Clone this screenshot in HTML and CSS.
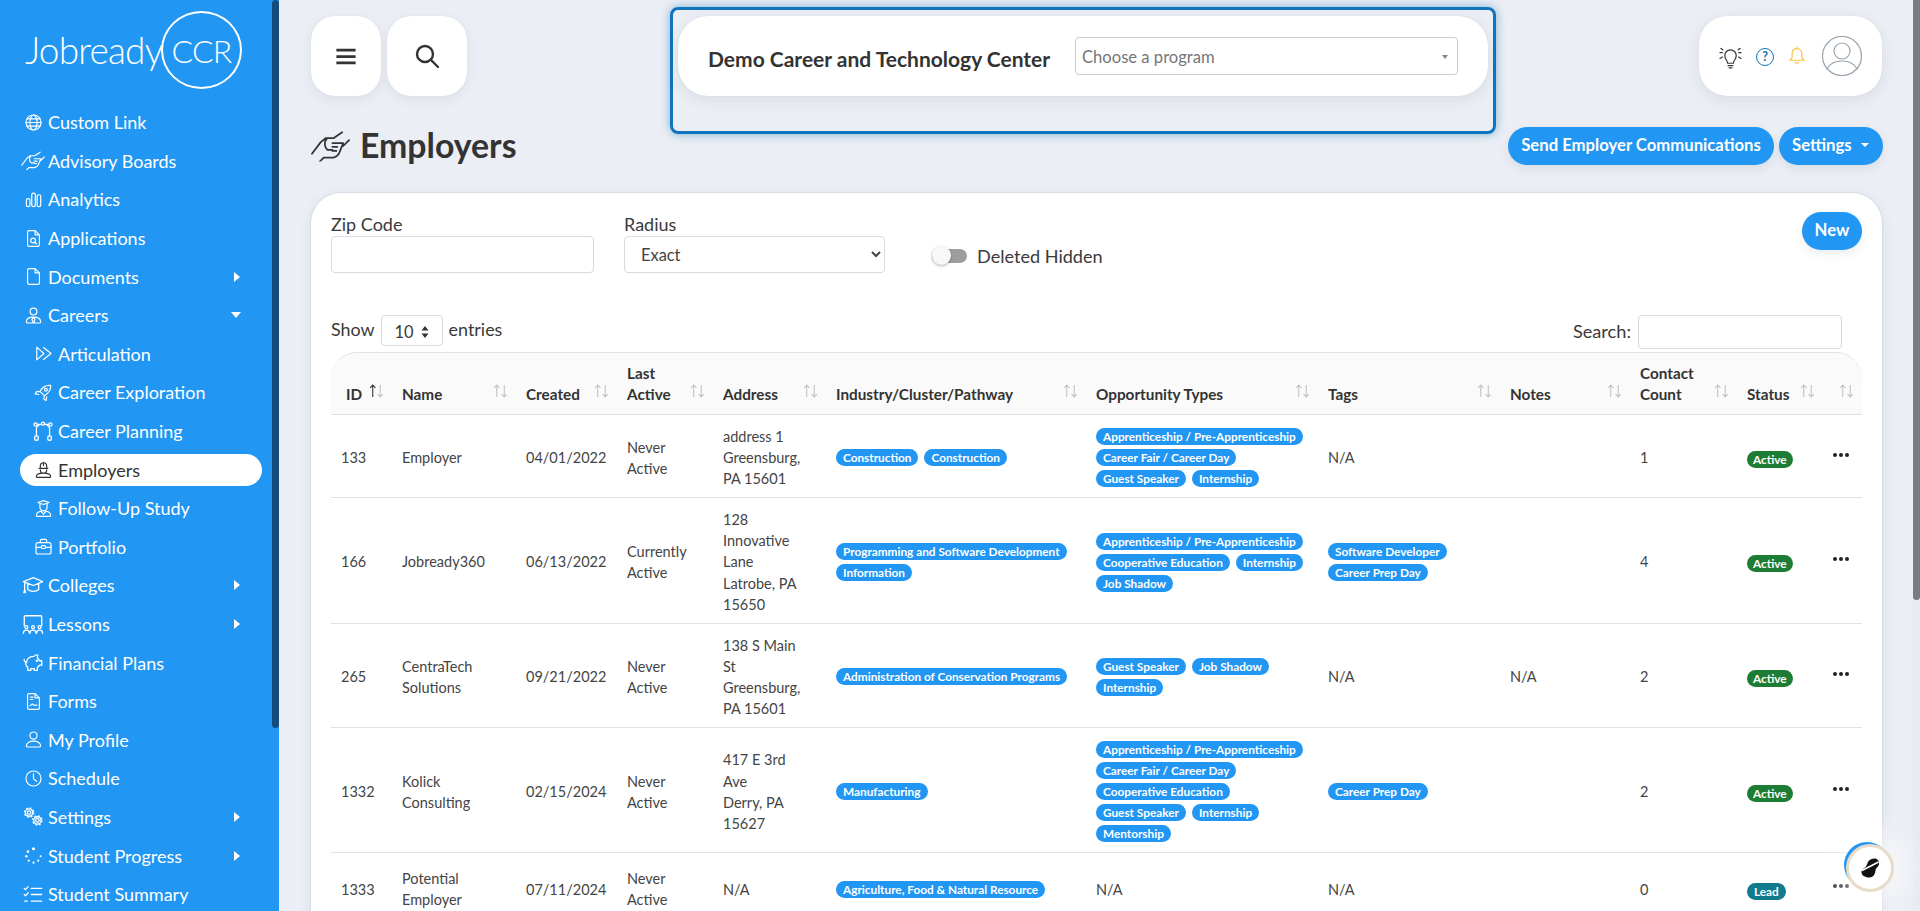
FILE: index.html
```html
<!DOCTYPE html>
<html lang="en">
<head>
<meta charset="utf-8">
<title>Employers</title>
<link rel="stylesheet" href="styles.css">
</head>
<body>
<svg class="defs" width="0" height="0" aria-hidden="true">
  <symbol id="i-shake" viewBox="0 0 40 32"><path d="M1 24L10 12M39 10l-6 6M10 12l5-4h8L32 2M16 9c-3 3-2 9 1 11h5M22 13h11l-4 10c-1 3-3 4-6 5H13l-4 4M22 17h5M22 21h4"/></symbol>
  <symbol id="i-sort" viewBox="0 0 14 13"><path class="up" d="M3.500 12V1M1 3.500L3.500 1 6 3.500"/><path class="down" d="M10.500 1v11M8 9.500l2.500 2.500 2.500-2.500"/></symbol>
  <symbol id="i-doc" viewBox="0 0 24 24"><path d="M6.500 2H14l5.500 5.500V20a2 2 0 0 1-2 2h-11a2 2 0 0 1-2-2V4a2 2 0 0 1 2-2zM14 2v5.500h5.500"/></symbol>
</svg>

<div class="app">
  <aside class="sidebar">
    <div class="logo"><span class="logo-word">Jobready</span><span class="logo-ring">CCR</span></div>
    <nav class="nav">
      <a class="item"><span class="ic"><svg viewBox="0 0 24 24"><circle cx="12" cy="12" r="9.500"/><ellipse cx="12" cy="12" rx="4.500" ry="9.500"/><path d="M2.500 12h19M3.800 7.500h16.400M3.800 16.500h16.400"/></svg></span>Custom Link</a>
      <a class="item"><span class="ic"><svg class="wide" viewBox="0 0 40 32"><use href="#i-shake"/></svg></span>Advisory Boards</a>
      <a class="item"><span class="ic"><svg viewBox="0 0 24 24"><rect x="3" y="11" width="4.500" height="10" rx="2"/><rect x="9.800" y="4" width="4.500" height="17" rx="2"/><rect x="16.600" y="6" width="4.500" height="15" rx="2"/></svg></span>Analytics</a>
      <a class="item"><span class="ic"><svg viewBox="0 0 24 24"><use href="#i-doc"/><circle cx="11.500" cy="14.500" r="3"/><path d="M13.700 16.700l2.300 2.300"/></svg></span>Applications</a>
      <a class="item"><span class="ic"><svg viewBox="0 0 24 24"><use href="#i-doc"/></svg></span>Documents<i class="car-r"></i></a>
      <a class="item"><span class="ic"><svg viewBox="0 0 24 24"><circle cx="12" cy="7" r="4.300"/><path d="M4 21.500c-1 0-1-1-1-1.500 0-4 4-6 9-6s9 2 9 6c0 .5 0 1.500-1 1.500zM12 14.500l-2 2.500 2 4.500 2-4.500z"/></svg></span>Careers<i class="car-d"></i></a>
      <a class="item sub"><span class="ic"><svg viewBox="0 0 24 24"><path d="M3.500 4v16l9-8zM12 4.500L21.500 12 12 19.500"/></svg></span>Articulation</a>
      <a class="item sub"><span class="ic"><svg viewBox="0 0 24 24"><path d="M21 3c-6-.5-10.500 2-13.500 7.500l5.500 5.500C18.500 13 21.500 9 21 3zM7.500 10.500L3 11l-1.500 2.800 4.500.7M13 16l-.5 4.500 2.800 1.500.7-4.500"/><circle cx="15" cy="8.500" r="1.800"/></svg></span>Career Exploration</a>
      <a class="item sub"><span class="ic"><svg class="big" viewBox="0 0 24 24"><circle cx="3.500" cy="4" r="1.800"/><circle cx="12" cy="3" r="1.800"/><circle cx="20.500" cy="4" r="1.800"/><rect x="2.500" y="17" width="4" height="5" rx="1.500"/><rect x="17.500" y="17" width="4" height="5" rx="1.500"/><path d="M5.300 3.800h4.900M13.800 3.800h4.900M4.500 17V8c0-1 1-2 3-3.500M19.500 17V8c0-1-1-2-3-3.500"/></svg></span>Career Planning</a>
      <a class="item sub active"><span class="ic"><svg viewBox="0 0 24 24"><path d="M6.500 10.500h11M8 10V7.500a4 4 0 0 1 8 0V10M12 3v4M8 12.500a4 4 0 0 0 8 0M4 22c-.8 0-1-.7-1-1.300C3 18 7 16.500 12 16.500s9 1.500 9 4.200c0 .6-.2 1.300-1 1.300z"/></svg></span>Employers</a>
      <a class="item sub"><span class="ic"><svg viewBox="0 0 24 24"><path d="M5 4.500L12 2l7 2.500L12 7zM7.500 6v4.500a4.500 4.500 0 0 0 9 0V6M4 22c-.8 0-1-.7-1-1.300C3 18 6 16 9 15.500l3 3.500 3-3.500c3 .5 6 2.500 6 5.200 0 .6-.2 1.300-1 1.300z"/></svg></span>Follow-Up Study</a>
      <a class="item sub"><span class="ic"><svg viewBox="0 0 24 24"><rect x="2.500" y="7" width="19" height="14.500" rx="2.500"/><path d="M8 7V4.500A1.500 1.500 0 0 1 9.500 3h5A1.500 1.500 0 0 1 16 4.500V7M2.500 13h7M14.500 13h7"/><rect x="9.500" y="11" width="5" height="3.500" rx="1"/></svg></span>Portfolio</a>
      <a class="item"><span class="ic"><svg class="big" viewBox="0 0 24 24"><path d="M1 7.500L12.500 3 23 7.500 12.500 12zM6 10v6.500c3.500 3 9.500 3 12.500 0V10M2.500 8.500V17M1.500 20l1-3 1 3z"/></svg></span>Colleges<i class="car-r"></i></a>
      <a class="item"><span class="ic"><svg class="big" viewBox="0 0 24 24"><path d="M2 13.500V3.500A1.500 1.500 0 0 1 3.500 2h17A1.500 1.500 0 0 1 22 3.500v10"/><circle cx="4.500" cy="15" r="1.700"/><circle cx="12" cy="15" r="1.700"/><circle cx="19.500" cy="15" r="1.700"/><path d="M1 22c0-2.500 1-3.500 3.500-3.500S8 19.500 8 22M8.500 22c0-2.500 1-3.500 3.500-3.500s3.500 1 3.500 3.500M16 22c0-2.500 1-3.500 3.500-3.500S23 19.500 23 22"/></svg></span>Lessons<i class="car-r"></i></a>
      <a class="item"><span class="ic"><svg class="big" viewBox="0 0 24 24"><path d="M5 10c1-3 4-5 8-5 1-1 3-2 4.500-1.500l-.5 3c1 1 2 2 2.500 3.500H22v5h-2.500c-.5 1-1.500 2-2.500 2.500V21h-3.500v-2h-4v2H6v-3.500C4 16 3 13 5 10zM5 11.500C3 11.500 1.500 10.500 2 8.500"/><circle cx="16.500" cy="10" r=".8"/></svg></span>Financial Plans</a>
      <a class="item"><span class="ic"><svg viewBox="0 0 24 24"><use href="#i-doc"/><path d="M8 6.500h3.500M8 9.500h3M7.500 17.500l3-2.500 2.500 2 3.500-.5"/></svg></span>Forms</a>
      <a class="item"><span class="ic"><svg viewBox="0 0 24 24"><circle cx="12" cy="7" r="4.500"/><path d="M4.500 21.500c-1 0-1.500-.7-1.500-1.500 0-3.500 4-6 9-6s9 2.500 9 6c0 .8-.5 1.500-1.500 1.500z"/></svg></span>My Profile</a>
      <a class="item"><span class="ic"><svg viewBox="0 0 24 24"><circle cx="12" cy="12" r="9.500"/><path d="M12 6v6.500l4 3"/></svg></span>Schedule</a>
      <a class="item"><span class="ic"><svg class="big" viewBox="0 0 24 24"><circle cx="7.500" cy="7.500" r="2"/><circle class="gear" cx="7.500" cy="7.500" r="5.200"/><circle cx="7.500" cy="7.500" r="4.200"/><circle cx="17" cy="16.500" r="2"/><circle class="gear" cx="17" cy="16.500" r="5.200"/><circle cx="17" cy="16.500" r="4.200"/></svg></span>Settings<i class="car-r"></i></a>
      <a class="item"><span class="ic"><svg class="fill" viewBox="0 0 24 24"><circle cx="12" cy="3.500" r="2"/><circle cx="5" cy="7" r="1.700"/><circle cx="3" cy="13" r="1.500"/><circle cx="6" cy="18.500" r="1.400"/><circle cx="12" cy="21" r="1.400"/><circle cx="18" cy="18.500" r="1.300"/><circle cx="21" cy="13" r="1.300"/></svg></span>Student Progress<i class="car-r"></i></a>
      <a class="item"><span class="ic"><svg class="big" viewBox="0 0 24 24"><path d="M2 5l1.500 1.500L6.500 3M2 12l1.500 1.500L6.500 10M2.500 19.500h3M10 5h12M10 12h12M10 19.500h12"/></svg></span>Student Summary</a>
    </nav>
    <div class="side-thumb"></div>
  </aside>

  <main class="main">
    <header class="top">
      <button class="tile tile-menu" type="button" aria-label="Menu"><svg viewBox="0 0 24 18"><path d="M1.500 2h21M1.500 9h21M1.500 16h21"/></svg></button>
      <button class="tile tile-search" type="button" aria-label="Search"><svg viewBox="0 0 24 24"><circle cx="10" cy="10" r="8"/><path d="M16 16l7 7"/></svg></button>
      <div class="focus-box">
        <div class="school">
          <span class="school-name">Demo Career and Technology Center</span>
          <div class="program"><span>Choose a program</span><i class="program-caret"></i></div>
        </div>
      </div>
      <div class="tools">
        <svg class="t-bulb" viewBox="0 0 24 24"><path d="M9 18c0-3-3-4-3-8a6 6 0 0 1 12 0c0 4-3 5-3 8zM9.500 20.500h5M10.500 22.800h3M1 7h2.500M1 13l2.500-1.500M2 2.500L4 4M23 7h-2.500M23 13l-2.500-1.500M22 2.500L20 4"/></svg>
        <span class="t-help">?</span>
        <svg class="t-bell" viewBox="0 0 24 24"><path d="M12 1v2.500M12 3.500c-4 0-6.500 3-6.500 7v4c0 2-1.500 3-3 4.500h19c-1.500-1.500-3-2.500-3-4.500v-4c0-4-2.500-7-6.500-7zM9.500 22c1.500 1 3.500 1 5 0"/></svg>
        <svg class="t-user" viewBox="0 0 40 40"><circle cx="20" cy="20" r="19.500"/><circle cx="20" cy="15" r="8"/><path d="M5 33c3-6 9-8 15-8s12 2 15 8"/></svg>
      </div>
    </header>

    <div class="title-row">
      <svg class="title-ic" viewBox="0 0 40 32"><use href="#i-shake"/></svg>
      <h1 class="title">Employers</h1>
      <div class="title-btns">
        <button class="btn" type="button">Send Employer Communications</button>
        <button class="btn btn-set" type="button">Settings<i class="btn-caret"></i></button>
      </div>
    </div>

    <section class="card">
      <div class="filters">
        <div class="field field-zip"><label class="lbl" for="zip">Zip Code</label><input class="inp" id="zip" type="text"></div>
        <div class="field field-radius"><label class="lbl" for="radius">Radius</label><select class="inp sel" id="radius"><option>Exact</option></select></div>
        <div class="toggle"><span class="track"></span><span>Deleted Hidden</span></div>
        <button class="btn btn-new" type="button">New</button>
      </div>
      <div class="controls">
        <div class="show">Show <span class="len"><span>10</span><svg viewBox="0 0 8 12"><path d="M4 0l3.500 4.500h-7zM4 12L.5 7.500h7z"/></svg></span> entries</div>
        <div class="find">Search: <input class="find-inp" type="text" aria-label="Search"></div>
      </div>
      <table class="tbl">
        <colgroup><col class="c1"><col class="c2"><col class="c3"><col class="c4"><col class="c5"><col class="c6"><col class="c7"><col class="c8"><col class="c9"><col class="c10"><col class="c11"><col class="c12"></colgroup>
        <thead>
          <tr>
            <th class="th-id">ID<svg class="sort on" viewBox="0 0 14 13"><use href="#i-sort"/></svg></th>
            <th>Name<svg class="sort" viewBox="0 0 14 13"><use href="#i-sort"/></svg></th>
            <th>Created<svg class="sort" viewBox="0 0 14 13"><use href="#i-sort"/></svg></th>
            <th>Last<br>Active<svg class="sort" viewBox="0 0 14 13"><use href="#i-sort"/></svg></th>
            <th>Address<svg class="sort" viewBox="0 0 14 13"><use href="#i-sort"/></svg></th>
            <th>Industry/Cluster/Pathway<svg class="sort" viewBox="0 0 14 13"><use href="#i-sort"/></svg></th>
            <th>Opportunity Types<svg class="sort" viewBox="0 0 14 13"><use href="#i-sort"/></svg></th>
            <th>Tags<svg class="sort" viewBox="0 0 14 13"><use href="#i-sort"/></svg></th>
            <th>Notes<svg class="sort" viewBox="0 0 14 13"><use href="#i-sort"/></svg></th>
            <th>Contact<br>Count<svg class="sort" viewBox="0 0 14 13"><use href="#i-sort"/></svg></th>
            <th>Status<svg class="sort" viewBox="0 0 14 13"><use href="#i-sort"/></svg></th>
            <th><svg class="sort" viewBox="0 0 14 13"><use href="#i-sort"/></svg></th>
          </tr>
        </thead>
        <tbody>
          <tr>
            <td>133</td><td>Employer</td><td>04/01/2022</td><td>Never<br>Active</td><td>address 1<br>Greensburg,<br>PA 15601</td>
            <td><div class="tags"><span class="tag">Construction</span><span class="tag">Construction</span></div></td>
            <td><div class="tags"><span class="tag">Apprenticeship / Pre-Apprenticeship</span><span class="tag">Career Fair / Career Day</span><span class="tag">Guest Speaker</span><span class="tag">Internship</span></div></td>
            <td>N/A</td><td></td><td>1</td><td><span class="tag st-active">Active</span></td><td><span class="more"><i></i><i></i><i></i></span></td>
          </tr>
          <tr>
            <td>166</td><td>Jobready360</td><td>06/13/2022</td><td>Currently<br>Active</td><td>128<br>Innovative<br>Lane<br>Latrobe, PA<br>15650</td>
            <td><div class="tags"><span class="tag">Programming and Software Development</span><span class="tag">Information</span></div></td>
            <td><div class="tags"><span class="tag">Apprenticeship / Pre-Apprenticeship</span><span class="tag">Cooperative Education</span><span class="tag">Internship</span><span class="tag">Job Shadow</span></div></td>
            <td><div class="tags"><span class="tag">Software Developer</span><span class="tag">Career Prep Day</span></div></td><td></td><td>4</td><td><span class="tag st-active">Active</span></td><td><span class="more"><i></i><i></i><i></i></span></td>
          </tr>
          <tr>
            <td>265</td><td>CentraTech<br>Solutions</td><td>09/21/2022</td><td>Never<br>Active</td><td>138 S Main<br>St<br>Greensburg,<br>PA 15601</td>
            <td><div class="tags"><span class="tag">Administration of Conservation Programs</span></div></td>
            <td><div class="tags"><span class="tag">Guest Speaker</span><span class="tag">Job Shadow</span><span class="tag">Internship</span></div></td>
            <td>N/A</td><td>N/A</td><td>2</td><td><span class="tag st-active">Active</span></td><td><span class="more"><i></i><i></i><i></i></span></td>
          </tr>
          <tr>
            <td>1332</td><td>Kolick<br>Consulting</td><td>02/15/2024</td><td>Never<br>Active</td><td>417 E 3rd<br>Ave<br>Derry, PA<br>15627</td>
            <td><div class="tags"><span class="tag">Manufacturing</span></div></td>
            <td><div class="tags"><span class="tag">Apprenticeship / Pre-Apprenticeship</span><span class="tag">Career Fair / Career Day</span><span class="tag">Cooperative Education</span><span class="tag">Guest Speaker</span><span class="tag">Internship</span><span class="tag">Mentorship</span></div></td>
            <td><div class="tags"><span class="tag">Career Prep Day</span></div></td><td></td><td>2</td><td><span class="tag st-active">Active</span></td><td><span class="more"><i></i><i></i><i></i></span></td>
          </tr>
          <tr class="row-last">
            <td>1333</td><td>Potential<br>Employer</td><td>07/11/2024</td><td>Never<br>Active</td><td>N/A</td>
            <td><div class="tags"><span class="tag">Agriculture, Food &amp; Natural Resource</span></div></td>
            <td>N/A</td><td>N/A</td><td></td><td>0</td><td><span class="tag st-lead">Lead</span></td><td><span class="more"><i></i><i></i><i></i></span></td>
          </tr>
        </tbody>
      </table>
    </section>
  </main>
  <div class="page-bar"><div class="page-thumb"></div></div>
</div>

<button class="chat" type="button" aria-label="Chat"><svg viewBox="0 0 24 24"><path d="M16.500 2.500c3 0 5 2.500 4.500 5.500-.3 2-1.500 3-2.500 4s-.8 2.500-1.500 5c-1 3.500-4 5-7 4.500C6.500 21 3 19 3.500 15.500c.3-2 2-3 3.500-4s1.500-2.500 3-5.500c1.200-2.300 3.500-3.500 6.500-3.500z"/><path class="slash" d="M4 14.500L20.500 6"/></svg></button>
</body>
</html>
```

FILE: styles.css
```css
* { box-sizing: border-box; }
html, body { margin: 0; height: 911px; overflow: hidden; }
body { font-family: "Lato", "Noto Sans", sans-serif; color: #3a3a3a; background: #ebeef4; font-size: 14.5px; }
.defs { position: absolute; }
.app { display: flex; height: 911px; overflow: hidden; }
button { font-family: inherit; border: 0; cursor: pointer; }

/* sidebar */
.sidebar { width: 279px; flex: none; background: #2196f3; color: #fff; position: relative; height: 911px; overflow: hidden; }
.logo { height: 103px; padding: 11px 0 0 25px; display: flex; align-items: flex-start; }
.logo-word { font-size: 37px; font-weight: 300; line-height: 78px; letter-spacing: -.8px; width: 136px; flex: none; }
.logo-ring { width: 81px; height: 78px; border: 2px solid #fff; border-radius: 50%; display: flex; align-items: center; justify-content: center; font-size: 32px; font-weight: 300; letter-spacing: -.8px; }
.nav { width: 272px; }
.item { display: flex; align-items: center; height: 38.6px; padding: 0 31px 0 21px; font-size: 18px; font-weight: 400; white-space: nowrap; }
.item.sub { padding-left: 31px; }
.item.active { background: #fff; color: #333; margin: 3.3px 10px 3.3px 20px; height: 32px; padding-left: 11px; border-radius: 16px; }
.ic { width: 24px; height: 22px; margin-right: 3px; flex: none; display: flex; align-items: center; justify-content: center; }
.ic svg { width: 19px; height: 19px; fill: none; stroke: currentColor; stroke-width: 1.5; stroke-linecap: round; stroke-linejoin: round; overflow: visible; }
.ic svg.wide { width: 24px; height: 19px; stroke-width: 2; }
.ic svg.big { width: 22px; height: 21px; }
.ic svg.fill { fill: currentColor; stroke: none; }
.ic .gear { stroke-dasharray: 2 2.09; stroke-width: 1.7; stroke-linecap: butt; }
.car-r { margin-left: auto; margin-right: 1px; width: 0; height: 0; border-left: 6px solid #fff; border-top: 5.5px solid transparent; border-bottom: 5.5px solid transparent; }
.car-d { margin-left: auto; width: 0; height: 0; border-top: 6px solid #fff; border-left: 5.5px solid transparent; border-right: 5.5px solid transparent; }
.side-thumb { position: absolute; top: 0; right: 0; width: 7px; height: 728px; background: #144d7c; border-radius: 4px; }

/* main */
.main { flex: 1; min-width: 0; padding: 16px 31px 0 32px; }
.top { display: flex; height: 80px; gap: 6px; align-items: flex-start; }
.tile { background: #fff; border-radius: 24px; height: 80px; display: flex; align-items: center; justify-content: center; box-shadow: 0 4px 12px rgba(60,80,110,.08), 0 0 1px rgba(60,80,110,.2); flex: none; }
.tile svg { fill: none; stroke: #333; }
.tile-menu { width: 70px; }
.tile-menu svg { width: 22px; height: 17px; stroke-width: 3; }
.tile-search { width: 80px; }
.tile-search svg { width: 24px; height: 24px; stroke-width: 2.4; stroke-linecap: round; }
.focus-box { margin: -9px 0 0 197px; width: 826px; height: 127px; flex: none; border: 3px solid #0f75bc; border-radius: 8px; padding: 6px 5px; box-shadow: 0 0 10px rgba(15,117,188,.5); }
.school { height: 80px; width: 810px; background: #fff; border-radius: 30px; display: flex; align-items: center; padding: 0 30px 0 30px; box-shadow: 0 4px 14px rgba(60,80,110,.1), 0 0 1px rgba(60,80,110,.2); }
.school-name { font-size: 21px; font-weight: 700; color: #333; width: 367px; flex: none; white-space: nowrap; margin-top: 4px; }
.program { flex: 1; height: 38px; border: 1px solid #c8ccd0; border-radius: 4px; display: flex; align-items: center; justify-content: space-between; padding: 2px 9px 0 6px; color: #777; font-size: 16.6px; }
.program-caret { border-top: 4px solid #888; border-left: 3.5px solid transparent; border-right: 3.5px solid transparent; }
.tools { margin-left: auto; width: 183px; height: 80px; flex: none; background: #fff; border-radius: 28px; display: flex; align-items: center; padding: 0 20px 0 20px; box-shadow: 0 4px 14px rgba(60,80,110,.1), 0 0 1px rgba(60,80,110,.2); }
.tools svg { fill: none; stroke-linecap: round; stroke-linejoin: round; flex: none; }
.t-bulb { width: 23px; height: 23px; stroke: #3a3a3a; stroke-width: 1.3; margin: 2px 14px 0 0; }
.t-help { width: 18px; height: 18px; flex: none; border: 1.5px solid #0f75b5; border-radius: 50%; color: #0f75b5; font-size: 12.5px; font-weight: 700; line-height: 15px; text-align: center; margin: 2px 14px 0 0; }
.t-bell { width: 18px; height: 20px; stroke: #f5c542; stroke-width: 1.6; margin: -2px 16px 0 0; }
.t-user { width: 40px; height: 40px; stroke: #9aa4ae; stroke-width: 1.2; }

.title-row { display: flex; align-items: center; height: 38px; margin-top: 31px; }
.title-ic { width: 39px; height: 32px; fill: none; stroke: #333; stroke-width: 1.8; stroke-linecap: round; stroke-linejoin: round; flex: none; margin-right: 10px; }
.title { margin: -3px 0 0; font-size: 33.8px; font-weight: 700; color: #333; line-height: 38px; }
.title-btns { margin-left: auto; display: flex; gap: 5px; margin-right: -1px; }
.btn { background: #2196f3; color: #fff; font-weight: 700; font-size: 16.7px; height: 38px; border-radius: 19px; padding: 0 0 2px; white-space: nowrap; box-shadow: 0 4px 10px rgba(60,80,110,.1); }
.title-btns .btn:first-child { width: 266px; }
.btn-set { width: 104px; display: flex; align-items: center; padding-left: 13px; }
.btn-caret { margin-left: 9px; border-top: 4px solid #fff; border-left: 4px solid transparent; border-right: 4px solid transparent; }
.btn-new { width: 60px; margin-left: auto; }

.card { background: #fff; border-radius: 30px 30px 0 0; margin-top: 28px; padding: 19px 20px 0; height: 800px; box-shadow: 0 0 2px rgba(60,80,110,.25), 0 4px 14px rgba(60,80,110,.08); }
.filters { display: flex; align-items: flex-start; height: 61px; }
.field { display: flex; flex-direction: column; }
.field-zip { width: 263px; margin-right: 30px; }
.field-radius { width: 261px; margin-right: 47px; }
.lbl { font-size: 18px; line-height: 24px; color: #3a3a3a; }
.inp { height: 37px; width: 100%; border: 1px solid #d4dbe3; border-radius: 4px; background: #fff; font-family: inherit; font-size: 16.4px; color: #444; padding: 0 12px; }
.toggle { display: flex; align-items: center; gap: 10px; font-size: 18.1px; line-height: 24px; margin-top: 32px; }
.track { position: relative; width: 35px; height: 14px; background: #9e9e9e; border-radius: 7px; }
.track::before { content: ""; position: absolute; left: 0; top: -3px; width: 19px; height: 19px; border-radius: 50%; background: #f8f8f8; box-shadow: 0 1px 3px rgba(0,0,0,.3); }
.controls { display: flex; justify-content: space-between; margin-top: 42px; height: 34px; }
.show { display: flex; align-items: flex-start; gap: 6px; font-size: 17.9px; line-height: 29px; }
.len { width: 62px; height: 31px; border: 1px solid #d4dbe3; border-radius: 4px; display: flex; align-items: center; justify-content: center; gap: 7px; font-size: 16.4px; padding-top: 2px; }
.len svg { width: 8px; height: 12px; fill: #333; }
.find { display: flex; align-items: flex-start; gap: 7px; font-size: 18.2px; line-height: 32px; margin-right: 20px; }
.find-inp { width: 204px; height: 34px; border: 1px solid #d4dbe3; border-radius: 4px; }

/* table */
.tbl { width: 1531px; table-layout: fixed; border-collapse: separate; border-spacing: 0; margin-top: 3px; }
.c1 { width: 61px; } .c2 { width: 124px; } .c3 { width: 101px; } .c4 { width: 96px; } .c5 { width: 113px; } .c6 { width: 260px; }
.c7 { width: 232px; } .c8 { width: 182px; } .c9 { width: 130px; } .c10 { width: 107px; } .c11 { width: 86px; } .c12 { width: 39px; }
.tbl th { position: relative; background: #fafafa; border-top: 1px solid #dee2e6; border-bottom: 1px solid #dee2e6; padding: 9px 10px 9px; height: 63px; text-align: left; vertical-align: bottom; font-weight: 700; font-size: 15.3px; line-height: 21px; color: #333; white-space: nowrap; }
.tbl th:first-child { border-top-left-radius: 26px; }
.tbl th:last-child { border-top-right-radius: 26px; }
.tbl th.th-id { padding-left: 15px; }
.sort { position: absolute; right: 8px; bottom: 16px; width: 15px; height: 14px; fill: none; stroke: #bfc3c7; stroke-width: 1; --up: #bfc3c7; }
.sort.on { --up: #333; }
.up { stroke: var(--up); }
.tbl td { padding: 11px 10px 8px; border-bottom: 1px solid #dee2e6; font-size: 14.5px; line-height: 21.1px; color: #444; vertical-align: middle; white-space: nowrap; }
.tbl .row-last td { height: 70px; }
.tags { display: flex; flex-wrap: wrap; column-gap: 6px; }
.tags .tag { margin: 2px 0; }
.tag { display: inline-block; height: 17px; line-height: 17px; padding: 0 7px; border-radius: 9px; background: #2196f3; color: #fff; font-size: 11.8px; font-weight: 700; white-space: nowrap; }
.st-active { background: #1e7d34; padding: 0 6px; position: relative; top: 1px; }
.st-lead { background: #117a8b; position: relative; top: 1px; }
.more { display: flex; gap: 2px; align-items: center; height: 6px; position: relative; top: -3px; }
.more i { width: 4px; height: 4px; border-radius: 50%; background: #222; }

.page-bar { width: 7px; flex: none; background: #e8ebf1; }
.page-thumb { height: 600px; background: #7b7b80; border-radius: 0 0 4px 4px; }

.chat { position: fixed; left: 1846px; top: 844px; width: 48px; height: 48px; border-radius: 50%; background: #fff; border: 3px solid #e8dcc8; padding: 0; display: flex; align-items: center; justify-content: center; box-shadow: -3px -3px 0 -1px #2196f3, 0 0 26px 14px rgba(255,255,255,.55); }
.chat svg { width: 24px; height: 24px; fill: #111; }
.chat .slash { fill: none; stroke: #fff; stroke-width: 1.6; }
```
